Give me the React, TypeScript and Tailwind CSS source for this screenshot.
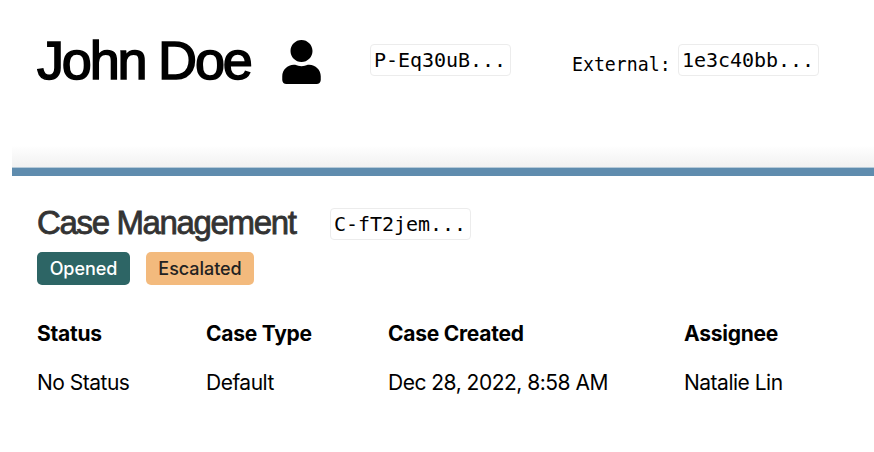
import { FaUser } from 'react-icons/fa';

interface CodeTagProps {
  value: string;
  className?: string;
}

function CodeTag({ value, className = '' }: CodeTagProps) {
  return (
    <code
      className={`flex h-8 w-[141px] shrink-0 items-center rounded border border-[#ececec] bg-white pl-[3px] font-['DejaVu_Sans_Mono',monospace] text-[20px] tracking-[-0.04px] text-black ${className}`}
    >
      {value}
    </code>
  );
}

const details = [
  { label: 'Status', value: 'No Status' },
  { label: 'Case Type', value: 'Default' },
  { label: 'Case Created', value: 'Dec 28, 2022, 8:58 AM' },
  { label: 'Assignee', value: 'Natalie Lin' },
];

export default function App() {
  return (
    <div className="h-[452px] w-[874px] overflow-hidden bg-white font-['Inter',sans-serif] text-black">
      <header className="ml-3 flex h-[167px] items-start bg-linear-to-b from-white from-[87%] to-[#f1f1f1] pl-[25px]">
        <h1 className="mt-[36px] w-[245px] whitespace-nowrap font-['Liberation_Sans',sans-serif] text-[54px] leading-[48px] tracking-[-2.2px] [-webkit-text-stroke:1.6px_black]">
          John Doe
        </h1>
        <FaUser className="mt-[40px] h-[44px] w-[39px]" />
        <CodeTag value="P-Eq30uB..." className="ml-[49px] mt-[44px]" />
        <span className="ml-[61px] mt-[52px] w-[106px] shrink-0 font-['DejaVu_Sans_Mono',monospace] text-[20px] leading-6">
          <span className="inline-block origin-left scale-x-[0.91]">External:</span>
        </span>
        <CodeTag value="1e3c40bb..." className="mt-[44px]" />
      </header>
      <div className="ml-3 h-[9px] border-t border-[#b6cad8] bg-[#5f8cae]" />
      <main className="px-[37px] pt-[28px]">
        <div className="flex items-start">
          <h2 className="w-[293px] whitespace-nowrap font-['Liberation_Sans',sans-serif] text-[33px] leading-[38px] tracking-[-1.35px] text-[#333] [-webkit-text-stroke:0.8px_#333]">
            Case Management
          </h2>
          <CodeTag value="C-fT2jem..." className="mt-1" />
        </div>
        <div className="mt-[10px] flex gap-4 text-[18px] font-medium tracking-[-0.05px]">
          <span className="flex h-[33px] w-[93px] items-center justify-center rounded-[5px] bg-[#2d6565] text-white">
            Opened
          </span>
          <span className="flex h-[33px] w-[108px] items-center justify-center rounded-[5px] bg-[#f3ba7d] text-[#222]">
            Escalated
          </span>
        </div>
        <dl className="mt-[34px] grid grid-cols-[169px_182px_296px_150px] text-[21px] leading-[30px]">
          {details.map(({ label, value }) => (
            <div key={label} className="whitespace-nowrap">
              <dt className="font-bold tracking-[-0.25px]">{label}</dt>
              <dd className="mt-[19px] tracking-[-0.5px]">{value}</dd>
            </div>
          ))}
        </dl>
      </main>
    </div>
  );
}
